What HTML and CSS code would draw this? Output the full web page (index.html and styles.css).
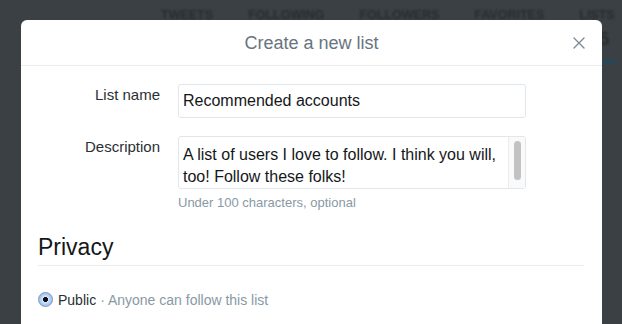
FILE: index.html
```html
<!DOCTYPE html>
<html lang="en">
<head>
    <meta charset="UTF-8">
    <meta name="viewport" content="width=device-width, initial-scale=1.0">
    <title>Create a new list</title>
    <link rel="stylesheet" href="styles.css">
</head>
<body>
    <!-- profile page behind the overlay -->
    <nav class="profile-nav">
        <a href="#" class="nav-item"><span class="nav-label">Tweets</span><span class="nav-count">2,310</span></a>
        <a href="#" class="nav-item"><span class="nav-label">Following</span><span class="nav-count">412</span></a>
        <a href="#" class="nav-item"><span class="nav-label">Followers</span><span class="nav-count">1,208</span></a>
        <a href="#" class="nav-item"><span class="nav-label">Favorites</span><span class="nav-count">96</span></a>
        <a href="#" class="nav-item active"><span class="nav-label">Lists</span><span class="nav-count">125</span></a>
    </nav>

    <div class="modal">
        <div class="modal-header">
            <h3 class="modal-title">Create a new list</h3>
            <button class="modal-close" aria-label="Close">
                <svg width="12" height="12" viewBox="0 0 12 12">
                    <path d="M1 1 L11 11 M11 1 L1 11" stroke="#7d8b96" stroke-width="1.4" stroke-linecap="round" fill="none"/>
                </svg>
            </button>
        </div>

        <div class="modal-body">
            <div class="form-row">
                <label for="list-name">List name</label>
                <div class="field">
                    <input id="list-name" class="text-input" type="text" value="Recommended accounts">
                </div>
            </div>

            <div class="form-row">
                <label>Description</label>
                <div class="field">
                    <div class="textarea">
                        <div class="textarea-text">A list of users I love to follow. I think you will, too! Follow these folks!</div>
                        <div class="scrollbar"><div class="scroll-thumb"></div></div>
                    </div>
                    <p class="hint">Under 100 characters, optional</p>
                </div>
            </div>

            <h2 class="section-title">Privacy</h2>

            <div class="radio-list">
                <div class="radio-row">
                    <span class="radio checked"></span>
                    <span class="radio-label">Public</span>
                    <span class="radio-desc">&middot; Anyone can follow this list</span>
                </div>
                <div class="radio-row">
                    <span class="radio"></span>
                    <span class="radio-label">Private</span>
                    <span class="radio-desc">&middot; Only you can access this list</span>
                </div>
            </div>
        </div>
    </div>
</body>
</html>
```

FILE: styles.css
```css
:root {
    --overlay-color: #3b4044;
    --text-color: #14171a;
    --muted-color: #66757f;
    --hint-color: #8899a6;
    --border-color: #e1e8ed;
    --divider-color: #e6ecf0;
}

* {
    margin: 0;
    padding: 0;
    box-sizing: border-box;
    font-family: 'Liberation Sans', Arial, Helvetica, sans-serif;
}

html, body {
    height: 100%;
    overflow: hidden;
}

body {
    background-color: var(--overlay-color);
    color: var(--text-color);
    position: relative;
}

/* page behind the dialog */
.profile-nav {
    display: flex;
    gap: 35px;
    padding-left: 161px;
    filter: blur(1px);
}

.nav-item {
    display: flex;
    flex-direction: column;
    padding-top: 8px;
    padding-bottom: 10px;
    border-bottom: 3px solid transparent;
    text-decoration: none;
    color: #282c2f;
}

.nav-item.active {
    border-bottom-color: #1f4a5f;
}

.nav-label {
    font-size: 12.5px;
    line-height: 15px;
    font-weight: bold;
    text-transform: uppercase;
}

.nav-count {
    margin-top: 5px;
    font-size: 18px;
    line-height: 22px;
    font-weight: bold;
}

/* dialog */
.modal {
    position: absolute;
    top: 20px;
    left: 21px;
    width: 581px;
    height: 420px;
    background-color: white;
    border-radius: 6px;
}

.modal-header {
    position: relative;
    height: 46px;
    display: flex;
    align-items: center;
    justify-content: center;
    border-bottom: 1px solid var(--divider-color);
}

.modal-title {
    font-size: 18px;
    line-height: 24px;
    font-weight: normal;
    color: var(--muted-color);
}

.modal-close {
    position: absolute;
    right: 17px;
    top: 17px;
    width: 12px;
    height: 12px;
    border: none;
    background: none;
    display: flex;
    cursor: pointer;
}

.modal-body {
    padding: 18px 18px 0 17px;
}

.form-row {
    display: grid;
    grid-template-columns: 122px 348px;
    column-gap: 18px;
    margin-bottom: 18px;
}

.form-row label {
    text-align: right;
    font-size: 15px;
    line-height: 22px;
    color: #292f33;
}

.text-input {
    width: 100%;
    height: 34px;
    padding: 6px 4px;
    border: 1px solid var(--border-color);
    border-radius: 3px;
    font-size: 16px;
    line-height: 20px;
    color: var(--text-color);
    outline: none;
}

.textarea {
    display: flex;
    height: 53px;
    border: 1px solid var(--border-color);
    border-radius: 3px;
    overflow: hidden;
}

.textarea-text {
    flex: 1;
    padding: 7px 4px;
    font-size: 16px;
    line-height: 22px;
    color: var(--text-color);
}

.scrollbar {
    width: 17px;
    background-color: #fafafa;
    border-left: 1px solid #ececec;
    display: flex;
    justify-content: center;
    padding-top: 4px;
    padding-bottom: 8px;
}

.scroll-thumb {
    width: 7px;
    height: 100%;
    border-radius: 4px;
    background-color: #c2c2c2;
}

.hint {
    margin-top: 6px;
    font-size: 13px;
    line-height: 16px;
    color: var(--hint-color);
}

.form-row:last-of-type {
    margin-bottom: 0;
}

.section-title {
    margin-top: 22px;
    padding-bottom: 4px;
    border-bottom: 1px solid var(--divider-color);
    font-size: 23px;
    line-height: 28px;
    font-weight: normal;
    color: var(--text-color);
}

.radio-list {
    margin-top: 22px;
    display: flex;
    flex-direction: column;
    gap: 12px;
}

.radio-row {
    display: flex;
    align-items: center;
    font-size: 14px;
    line-height: 20px;
}

.radio {
    width: 15px;
    height: 15px;
    margin-right: 5px;
    border-radius: 50%;
    border: 1px solid #b3b3b3;
    background-color: white;
    flex-shrink: 0;
}

.radio.checked {
    border-color: #7d97bb;
    background: radial-gradient(circle, #111 0, #111 2.2px, #d6e7fb 2.8px, #a9c9f1 60%, #84ace0 100%);
}

.radio-label {
    color: #292f33;
    margin-right: 4px;
    padding-top: 2px;
}

.radio-desc {
    color: var(--hint-color);
    padding-top: 2px;
}
```
